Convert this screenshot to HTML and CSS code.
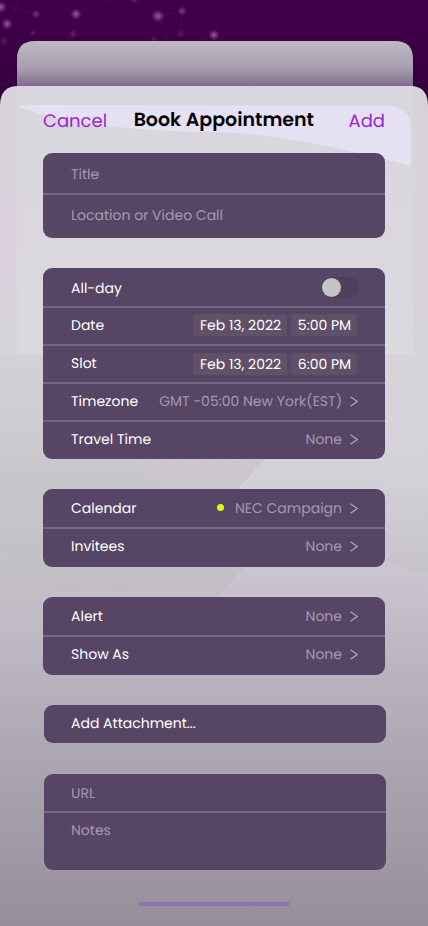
FILE: index.html
```html
<!DOCTYPE html>
<html lang="en">
<head>
<meta charset="utf-8">
<title>Book Appointment</title>
<link rel="stylesheet" href="styles.css">
</head>
<body>
<svg class="backdrop" viewBox="0 0 428 926" width="428" height="926" aria-hidden="true">
  <defs>
    <linearGradient id="night" x1="0" y1="0" x2="0" y2="1"><stop offset="0" stop-color="#42004b"/><stop offset="1" stop-color="#300038"/></linearGradient>
    <linearGradient id="back" x1="0" y1="0" x2="0" y2="1"><stop offset="0" stop-color="#beb8c5"/><stop offset=".6" stop-color="#a69dae"/><stop offset="1" stop-color="#7e698d"/></linearGradient>
    <linearGradient id="front" gradientUnits="userSpaceOnUse" x1="0" y1="86" x2="0" y2="926">
      <stop offset="0" stop-color="#d7d3da"/><stop offset=".3" stop-color="#d7d4d9"/><stop offset=".42" stop-color="#d6d4da"/><stop offset=".54" stop-color="#cecad3"/><stop offset=".62" stop-color="#c5bfca"/><stop offset=".7" stop-color="#b9b3bf"/><stop offset=".8" stop-color="#aca6b1"/><stop offset="1" stop-color="#968f9b"/>
    </linearGradient>
    <linearGradient id="pane" x1="0" y1="0" x2="0" y2="1"><stop offset="0" stop-color="#d9d6dd"/><stop offset="1" stop-color="#dad9de"/></linearGradient>
    <radialGradient id="star"><stop offset="0" stop-color="#ac68b1" stop-opacity=".85"/><stop offset=".4" stop-color="#96509e" stop-opacity=".6"/><stop offset="1" stop-color="#75327f" stop-opacity="0"/></radialGradient>
    <linearGradient id="shade" gradientUnits="userSpaceOnUse" x1="0" y1="354" x2="0" y2="690"><stop offset="0" stop-color="#bab9bb" stop-opacity=".1"/><stop offset=".35" stop-color="#bab9bb" stop-opacity=".42"/><stop offset=".65" stop-color="#b9b8bb" stop-opacity=".4"/><stop offset="1" stop-color="#b5b2b8" stop-opacity="0"/></linearGradient>
    <radialGradient id="pink"><stop offset="0" stop-color="#dfcfe6" stop-opacity=".6"/><stop offset=".6" stop-color="#dfcfe6" stop-opacity=".5"/><stop offset="1" stop-color="#dfcfe6" stop-opacity="0"/></radialGradient>
    <linearGradient id="fade" x1="0" y1="0" x2="0" y2="1"><stop offset="0" stop-color="#bab9bb" stop-opacity="0"/><stop offset="1" stop-color="#bab9bb" stop-opacity=".25"/></linearGradient>
    <pattern id="mesh" width="6" height="6" patternUnits="userSpaceOnUse" patternTransform="rotate(20)"><circle cx="3" cy="3" r="2" fill="#dbc5df" opacity=".35"/></pattern>
    <clipPath id="sheet"><path d="M0 106Q0 86 18 86H410Q428 86 428 106V926H0Z"/></clipPath>
  </defs>
  <rect width="428" height="130" fill="url(#night)"/>
  <g stroke="#8b4693" stroke-opacity=".13" fill="none">
    <path d="M0 5L36 14M7 24L20 0M60 0L76 14L112 0M76 14L73 34M76 14L87 36M148 0L158 16L182 11L180 34M158 16L168 38M182 11L214 35L200 40M0 85L17 79"/>
  </g>
  <g fill="url(#star)">
    <circle cx="1" cy="7" r="6"/><circle cx="7" cy="24" r="6"/><circle cx="36" cy="14" r="5" opacity=".6"/><circle cx="76" cy="14" r="6"/><circle cx="73" cy="34" r="5" opacity=".4"/><circle cx="158" cy="16" r="7"/><circle cx="182" cy="11" r="5" opacity=".7"/><circle cx="181" cy="34" r="5" opacity=".3"/><circle cx="214" cy="35" r="6"/><circle cx="33" cy="33" r="4" opacity=".3"/><circle cx="4" cy="41" r="5" opacity=".3"/><circle cx="134" cy="-1" r="5" opacity=".5"/><circle cx="154" cy="39" r="4" opacity=".3"/>
  </g>
  <path d="M17 87V59Q17 41 35 41H395Q413 41 413 59V87Z" fill="url(#back)"/>
  <g clip-path="url(#sheet)">
    <rect y="86" width="428" height="840" fill="url(#front)"/>
    <ellipse cx="0" cy="238" rx="30" ry="65" fill="url(#pink)"/>
    <path d="M0 354H370L265 459L238 489L250 562L217 596L120 690H0Z" fill="url(#shade)"/>
    <path d="M0 534H140V584C120 590 100 592 85 590C45 590 22 567 0 549Z" fill="#b8b8b8" opacity=".1"/>
    <path d="M120 459H265L238 489H175Z" fill="url(#mesh)"/>
    <path d="M428 480V574Q408 572 385 560V480Z" fill="url(#fade)"/>
    <rect x="17" y="86" width="396" height="268" fill="url(#pane)"/>
    <path d="M19.500 107C23 105 31 105 40 105L386 106Q411 106 411 128V165.500C350 151 285 134 216 132C130 132 54 121 19.500 107Z" fill="#e5e1f2"/>
  </g>
</svg>
<main class="screen">
  <header class="bar">
    <a class="action">Cancel</a>
    <h1 class="title">Book Appointment</h1>
    <a class="action">Add</a>
  </header>
  <section class="card card-title">
    <div class="row hint"><span>Title</span></div>
    <div class="row hint"><span>Location or Video Call</span></div>
  </section>
  <section class="card">
    <div class="row first"><span>All-day</span><span class="toggle"><i class="knob"></i></span></div>
    <div class="row"><span>Date</span><span class="chips"><b class="chip day">Feb 13, 2022</b><b class="chip hour">5:00 PM</b></span></div>
    <div class="row slot"><span>Slot</span><span class="chips"><b class="chip day">Feb 13, 2022</b><b class="chip hour">6:00 PM</b></span></div>
    <div class="row"><span>Timezone</span><span class="value"><span>GMT -05:00 New York(EST)</span><svg class="chev" viewBox="0 0 8 11"><path d="M.5 .8L7.300 5.500L.5 10.200"/></svg></span></div>
    <div class="row end"><span>Travel Time</span><span class="value"><span>None</span><svg class="chev" viewBox="0 0 8 11"><path d="M.5 .8L7.300 5.500L.5 10.200"/></svg></span></div>
  </section>
  <section class="card pair">
    <div class="row first"><span>Calendar</span><span class="value"><i class="dot"></i><span>NEC Campaign</span><svg class="chev" viewBox="0 0 8 11"><path d="M.5 .8L7.300 5.500L.5 10.200"/></svg></span></div>
    <div class="row"><span>Invitees</span><span class="value"><span>None</span><svg class="chev" viewBox="0 0 8 11"><path d="M.5 .8L7.300 5.500L.5 10.200"/></svg></span></div>
  </section>
  <section class="card pair">
    <div class="row first"><span>Alert</span><span class="value"><span>None</span><svg class="chev" viewBox="0 0 8 11"><path d="M.5 .8L7.300 5.500L.5 10.200"/></svg></span></div>
    <div class="row"><span>Show As</span><span class="value"><span>None</span><svg class="chev" viewBox="0 0 8 11"><path d="M.5 .8L7.300 5.500L.5 10.200"/></svg></span></div>
  </section>
  <section class="card shifted attach">
    <div class="row first"><span>Add Attachment...</span></div>
  </section>
  <section class="card shifted notes">
    <div class="row first hint"><span>URL</span></div>
    <div class="row hint"><span>Notes</span></div>
  </section>
  <div class="home"></div>
</main>
</body>
</html>
```

FILE: styles.css
```css
* { box-sizing: border-box; }
body { margin: 0; width: 428px; height: 926px; overflow: hidden; position: relative; background: #958e9a; font-family: Poppins, Inter, "Open Sans", sans-serif; text-rendering: geometricPrecision; }
.backdrop { position: absolute; left: 0; top: 0; display: block; }
.screen { position: relative; height: 926px; padding: 106px 43px 0; display: flex; flex-direction: column; }
.bar { height: 29px; margin-bottom: 18px; display: flex; justify-content: space-between; align-items: center; white-space: nowrap; }
.action { padding-top: 1px; color: #9a26cf; font-size: 18px; line-height: 29px; }
.title { margin: -1px 8px 0 0; color: #000; font-size: 19px; font-weight: 600; line-height: 28px; }
.card { width: 342px; flex: none; margin-bottom: 30px; border-radius: 9px; background: #564565; overflow: hidden; color: #fff; font-size: 14px; }
.row { height: 38px; padding: 0 27px 2px 28px; border-top: 2px solid #786783; display: flex; align-items: center; justify-content: space-between; line-height: 20px; white-space: nowrap; }
.row:first-child { border-top: 0; }
.row.end { height: 39px; padding-bottom: 3px; }
.row.first { padding-top: 2px; padding-bottom: 0; }
.pair .row { height: 40px; padding-bottom: 4px; }
.pair .row.first { height: 38px; padding-top: 0; padding-bottom: 0; }
.card-title .row { height: 40px; padding-top: 2px; padding-bottom: 0; }
.card-title .row:last-child { height: 45px; padding-bottom: 4px; padding-top: 0; }
.hint { color: #a899b0; }
.value { display: flex; align-items: center; color: #a698b0; }
.chev { width: 8px; height: 11px; margin-left: 8px; margin-top: 1px; fill: none; stroke: #b9a2c7; stroke-width: 1.100; }
.chips { display: flex; gap: 4px; margin-right: 1px; }
.chip { height: 22px; border-radius: 4px; background: #615168; font-weight: 400; line-height: 22px; text-align: center; }
.day { width: 94px; padding-left: 1px; }
.hour { width: 66px; padding-left: 1px; }
.slot .chips { margin-top: 2px; }
.toggle { width: 38px; height: 21px; margin: -1px -1px 0 0; padding: 1px; border-radius: 11px; background: #4e4058; }
.knob { display: block; width: 19px; height: 19px; border-radius: 50%; background: #c4c4c4; }
.dot { width: 7px; height: 7px; margin-right: 11px; margin-top: -1px; border-radius: 50%; background: #dcff00; }
.shifted { margin-left: 1px; }
.attach { margin-bottom: 31px; }
.shifted .row { padding-left: 27px; }
.attach .row.first { height: 38px; padding: 0 27px 2px; }
.notes { height: 96px; margin-bottom: 32px; }
.notes .row.first { height: 37px; padding-top: 1px; }
.home { width: 150px; height: 4px; margin-left: 96px; background: #8c73aa; }
```
